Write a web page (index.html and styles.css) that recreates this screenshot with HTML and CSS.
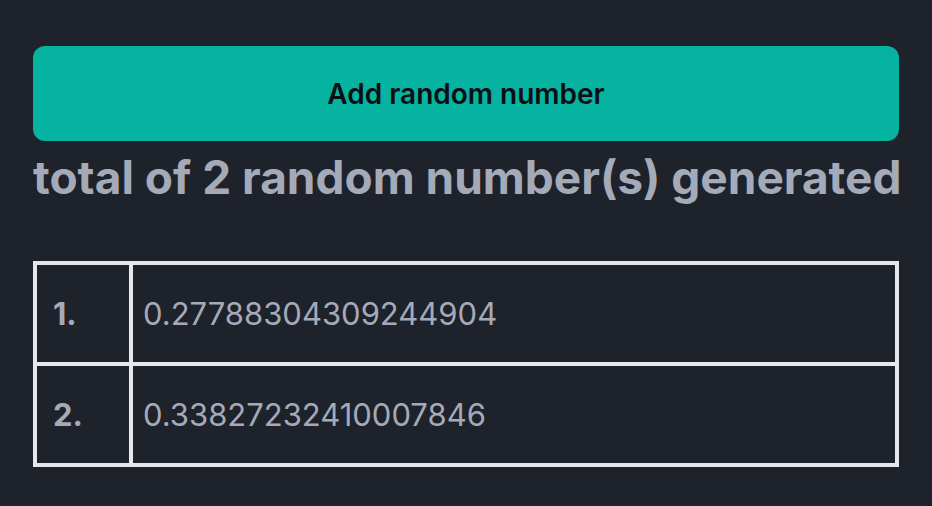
FILE: index.html
```html
<!DOCTYPE html>
<html lang="en">
<head>
    <meta charset="UTF-8">
    <meta name="viewport" content="width=device-width, initial-scale=1.0">
    <title>Random numbers</title>
    <link rel="stylesheet" href="styles.css">
</head>
<body>

    <div class="app">
        <button class="add-btn" type="button">Add random number</button>
        <h1 class="summary">total of 2 random number(s) generated</h1>

        <table class="numbers">
            <tr>
                <td class="idx">1.</td>
                <td class="val">0.27788304309244904</td>
            </tr>
            <tr>
                <td class="idx">2.</td>
                <td class="val">0.33827232410007846</td>
            </tr>
        </table>
    </div>

</body>
</html>
```

FILE: styles.css
```css
body {
    margin: 0;
    background: #1e222a;
    font-family: Inter, "Noto Sans", sans-serif;
    color: #a5aab9;
}
.app {
    padding: 46px 33px 0 33px;
}
.add-btn {
    display: block;
    width: 100%;
    height: 95px;
    border: none;
    border-radius: 12px;
    background: #06b2a0;
    color: #0b0f14;
    font-family: inherit;
    font-size: 28px;
    font-weight: 600;
}
.summary {
    margin: 8px 0 0 0;
    font-size: 46px;
    line-height: 56px;
    font-weight: 700;
    white-space: nowrap;
}
.numbers {
    width: 100%;
    margin-top: 56px;
    border-collapse: collapse;
    border: 4px solid #e5e7eb;
    font-size: 31px;
}
.numbers td {
    border: 4px solid #e5e7eb;
    height: 97px;
    padding: 0 10px;
}
.numbers td.idx {
    width: 60px;
    padding: 0 16px;
    font-weight: 700;
}
```
